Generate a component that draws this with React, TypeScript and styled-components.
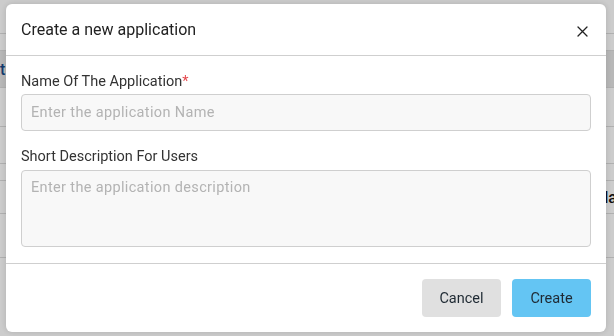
import React, { useState } from 'react'
import styled, { createGlobalStyle } from 'styled-components'

const GlobalStyle = createGlobalStyle`
  html, body {
    margin: 0;
    padding: 0;
    width: 614px;
    height: 336px;
    overflow: hidden;
    font-family: Roboto, 'Liberation Sans', sans-serif;
  }
  * {
    box-sizing: border-box;
  }
`

// 뒤쪽 페이지 (흐리게 보이는 테이블)
const Page = styled.div`
  width: 614px;
  height: 336px;
  background: #ffffff;
  padding-top: 33px;
`
const PageRow = styled.div<{ $dark?: boolean; $height: number }>`
  display: flex;
  align-items: center;
  height: ${(p) => p.$height}px;
  border-top: 1px solid #dcdcdc;
  background: ${(p) => (p.$dark ? '#e6e6e6' : '#ffffff')};
  font-size: 16px;
  font-weight: 500;
  color: #111111;
`
const PageCell = styled.div<{ $width: number; $divider?: boolean; $blue?: boolean }>`
  width: ${(p) => p.$width}px;
  height: 100%;
  display: flex;
  align-items: center;
  border-right: ${(p) => (p.$divider ? '1px solid #dcdcdc' : 'none')};
  color: ${(p) => (p.$blue ? '#1a4a8a' : 'inherit')};
  overflow: hidden;
  white-space: nowrap;
`

const Overlay = styled.div`
  position: fixed;
  inset: 0;
  background: rgba(0, 0, 0, 0.2);
`

const Modal = styled.div`
  position: fixed;
  left: 6px;
  top: 4px;
  width: 600px;
  height: 328px;
  background: #ffffff;
  border-radius: 6px;
  box-shadow: 0 0 6px rgba(0, 0, 0, 0.15);
  display: flex;
  flex-direction: column;
`
const Header = styled.div`
  height: 52px;
  padding: 0 15px;
  display: flex;
  align-items: center;
  justify-content: space-between;
  border-bottom: 1px solid #cfcfcf;
`
const Title = styled.h2`
  margin: 0;
  font-size: 16px;
  font-weight: 400;
  color: #222222;
`
const CloseButton = styled.button`
  width: 12px;
  height: 12px;
  padding: 0;
  border: none;
  background: none;
  display: flex;
  align-items: center;
  justify-content: center;
  margin: 4px 3px 0 0;
  cursor: pointer;
`
const Body = styled.div`
  padding: 16px 15px 16px;
  border-bottom: 1px solid #cfcfcf;
`
const Field = styled.div`
  display: flex;
  flex-direction: column;
  & + & {
    margin-top: 16px;
  }
`
const FieldLabel = styled.label`
  font-size: 14.5px;
  line-height: 20px;
  color: #333333;
`
const Required = styled.span`
  color: #e5484d;
`
const TextInput = styled.input`
  margin-top: 2px;
  height: 37px;
  padding: 0 9px;
  border: 1px solid #cfcfcf;
  border-radius: 4px;
  background: #f8f8f8;
  font-family: inherit;
  font-size: 14.5px;
  letter-spacing: 0.35px;
  color: #333333;
  outline: none;
  &::placeholder {
    color: #b3b3b3;
  }
`
const TextArea = styled.textarea`
  margin-top: 3px;
  height: 77px;
  padding: 8px 9px;
  border: 1px solid #cfcfcf;
  border-radius: 4px;
  background: #f8f8f8;
  font-family: inherit;
  font-size: 14.5px;
  letter-spacing: 0.35px;
  color: #333333;
  resize: none;
  outline: none;
  &::placeholder {
    color: #b3b3b3;
  }
`
const Footer = styled.div`
  flex: 1;
  display: flex;
  justify-content: flex-end;
  align-items: flex-start;
  gap: 11px;
  padding: 15px 15px 0;
`
const Button = styled.button<{ $primary?: boolean }>`
  width: 79px;
  height: 38px;
  border: none;
  border-radius: 4px;
  background: ${(p) => (p.$primary ? '#64c5f3' : '#e0e0e0')};
  font-family: inherit;
  font-size: 14.5px;
  color: #1f2a33;
  cursor: pointer;
`

const App = () => {
  const [name, setName] = useState('')
  const [description, setDescription] = useState('')

  return (
    <>
      <GlobalStyle />
      <Page>
        <PageRow $height={17} />
        <PageRow $height={37} $dark>
          <PageCell $width={614} $blue>
            t
          </PageCell>
        </PageRow>
        <PageRow $height={39} />
        <PageRow $height={37} />
        <PageRow $height={17} />
        <PageRow $height={33}>
          <PageCell $width={597} />
          <PageCell $width={17}>Na</PageCell>
        </PageRow>
        <PageRow $height={44} />
        <PageRow $height={43}>
          <PageCell $width={482} $divider />
        </PageRow>
      </Page>
      <Overlay />
      <Modal>
        <Header>
          <Title>Create a new application</Title>
          <CloseButton aria-label="close">
            <svg width="11" height="11" viewBox="0 0 11 11">
              <path d="M1 1L10 10M10 1L1 10" stroke="#222" strokeWidth="1.3" strokeLinecap="round" />
            </svg>
          </CloseButton>
        </Header>
        <Body>
          <Field>
            <FieldLabel>
              Name Of The Application<Required>*</Required>
            </FieldLabel>
            <TextInput
              placeholder="Enter the application Name"
              value={name}
              onChange={(e) => setName(e.target.value)}
            />
          </Field>
          <Field>
            <FieldLabel>Short Description For Users</FieldLabel>
            <TextArea
              placeholder="Enter the application description"
              value={description}
              onChange={(e) => setDescription(e.target.value)}
            />
          </Field>
        </Body>
        <Footer>
          <Button>Cancel</Button>
          <Button $primary>Create</Button>
        </Footer>
      </Modal>
    </>
  )
}

export default App
